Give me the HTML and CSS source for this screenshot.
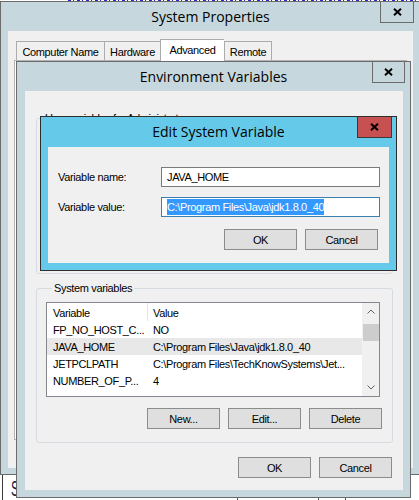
FILE: index.html
```html
<!DOCTYPE html>
<html>
<head>
<meta charset="utf-8">
<title>Edit System Variable</title>
<link rel="stylesheet" href="styles.css">
</head>
<body>
<div class="desk">
  <div class="bg-strip"></div>
  <div class="bg-bottom"><span class="bg-s">S</span></div>
  <div class="bg-cells"><div class="cell1"></div><div class="cell2"></div></div>

  <div class="win win-sys">
    <div class="tb">
      <div class="title">System Properties</div>
      <div class="close close-sys"><svg width="9" height="8" viewBox="0 0 9 8"><path d="M1 0.8 L8 7.2 M8 0.8 L1 7.2" stroke="#000" stroke-width="2" fill="none"/></svg></div>
    </div>
    <div class="client sys-client">
      <div class="tabs">
        <div class="tab t-cn">Computer Name</div>
        <div class="tab t-hw">Hardware</div>
        <div class="tab t-adv sel-tab">Advanced</div>
        <div class="tab t-rem">Remote</div>
      </div>
      <div class="tabpanel"></div>
    </div>
  </div>

  <div class="win win-env">
    <div class="tb">
      <div class="title">Environment Variables</div>
      <div class="close close-env"><svg width="9" height="8" viewBox="0 0 9 8"><path d="M1 0.8 L8 7.2 M8 0.8 L1 7.2" stroke="#000" stroke-width="2" fill="none"/></svg></div>
    </div>
    <div class="client env-client">
      <fieldset class="grp grp-user">
        <legend>User variables for Administrator</legend>
        <div class="user-space"></div>
      </fieldset>
      <fieldset class="grp grp-sys">
        <legend>System variables</legend>
        <div class="list">
          <div class="list-main">
            <div class="lrow lhead"><div class="c1">Variable</div><div class="c2">Value</div></div>
            <div class="lrow"><div class="c1">FP_NO_HOST_C...</div><div class="c2">NO</div></div>
            <div class="lrow hl"><div class="c1">JAVA_HOME</div><div class="c2">C:\Program Files\Java\jdk1.8.0_40</div></div>
            <div class="lrow"><div class="c1">JETPCLPATH</div><div class="c2">C:\Program Files\TechKnowSystems\Jet...</div></div>
            <div class="lrow"><div class="c1">NUMBER_OF_P...</div><div class="c2">4</div></div>
          </div>
          <div class="scroll">
            <div class="sbtn"><svg width="8" height="5" viewBox="0 0 8 5"><polyline points="0.5,4.5 4,1 7.5,4.5" stroke="#606060" fill="none"/></svg></div>
            <div class="track"><div class="thumb"></div></div>
            <div class="sbtn"><svg width="8" height="5" viewBox="0 0 8 5"><polyline points="0.5,0.5 4,4 7.5,0.5" stroke="#606060" fill="none"/></svg></div>
          </div>
        </div>
        <div class="btnrow grp-btns">
          <div class="btn">New...</div>
          <div class="btn">Edit...</div>
          <div class="btn">Delete</div>
        </div>
      </fieldset>
      <div class="btnrow env-btns">
        <div class="btn">OK</div>
        <div class="btn">Cancel</div>
      </div>
    </div>
  </div>

  <div class="win win-edit">
    <div class="tb">
      <div class="title">Edit System Variable</div>
      <div class="close close-edit"><svg width="9" height="8" viewBox="0 0 9 8"><path d="M1 0.8 L8 7.2 M8 0.8 L1 7.2" stroke="#000" stroke-width="2" fill="none"/></svg></div>
    </div>
    <div class="client edit-client">
      <div class="form">
        <div class="lbl">Variable name:</div>
        <div class="field">JAVA_HOME</div>
        <div class="lbl">Variable value:</div>
        <div class="field focus"><span class="selected">C:\Program Files\Java\jdk1.8.0_40</span></div>
      </div>
      <div class="btnrow edit-btns">
        <div class="btn">OK</div>
        <div class="btn">Cancel</div>
      </div>
    </div>
  </div>
</div>
</body>
</html>
```

FILE: styles.css
```css
* { box-sizing: border-box; }
html, body { margin: 0; padding: 0; }
body {
  width: 419px;
  height: 500px;
  overflow: hidden;
  background: #fff;
  font-family: "Liberation Sans", Arial, sans-serif;
  font-size: 11px;
  letter-spacing: -0.35px;
  color: #000;
}
.desk { position: relative; width: 419px; height: 500px; overflow: hidden; }

/* things behind the windows */
.bg-strip {
  position: absolute; top: 0; left: 68px; width: 351px; height: 1px;
  background: repeating-linear-gradient(90deg, #2a2ad0 0 3px, transparent 3px 5px, #2a2ad0 5px 6px, transparent 6px 9px);
}
.bg-bottom {
  position: absolute; left: 2px; top: 475px; width: 417px; height: 25px;
  background: #fff; border-left: 1px solid #3c3c3c;
}
.bg-s {
  display: inline-block; margin-left: 8px; margin-top: 3px;
  font-size: 22px; line-height: 22px; color: #1b1b3a;
  transform: scaleX(0.55); transform-origin: left top;
}
.bg-cells { position: absolute; left: 237px; top: 485px; display: flex; height: 20px; }
.cell1 { width: 81px; border-left: 1px solid #555; }
.cell2 { width: 28px; border-left: 1px solid #555; border-right: 1px solid #555; }

/* windows */
.win {
  position: absolute;
  display: flex; flex-direction: column;
  border: 1px solid #6b6b6b;
  background: #c6d8de;
}
.win-sys { left: 0; top: 1px; width: 421px; height: 474px; }
.win-env { left: 16px; top: 61px; width: 395px; height: 437px; }
.win-edit { left: 40px; top: 116px; width: 357px; height: 155px; background: #65caea; border-color: #2e2e2e; }

.tb {
  flex: none;
  height: 29px;
  display: grid;
  grid-template-columns: 1fr auto 1fr;
  align-items: center;
}
.win-edit .tb { height: 30px; }
.title {
  grid-column: 2;
  font-family: "Open Sans", "Noto Sans", sans-serif;
  font-size: 14px;
  letter-spacing: 0;
  white-space: nowrap;
  line-height: 18px;
  color: #000;
}
.close {
  grid-column: 3;
  justify-self: end;
  align-self: start;
  height: 21px;
  border: 1px solid #6b6b6b;
  border-top: 0;
  display: flex; align-items: center; justify-content: center;
}
.close svg { display: block; }
.close-sys { width: 34px; margin-right: 6px; }
.close-env { width: 33px; margin-right: 5px; }
.close-edit { width: 35px; margin-right: 4px; background: #c75050; border-color: #3a3a3a; }

.client { flex: 1; background: #f0f0f0; min-height: 0; }

/* System Properties */
.sys-client { margin: 0 7px 6px 7px; padding: 8px 6px 0; }
.tabs { display: flex; align-items: flex-end; height: 21px; margin-left: 2px; position: relative; z-index: 1; }
.tab {
  height: 19px;
  border: 1px solid #acacac; border-bottom: 0; border-right: 0;
  background: #f0f0f0;
  display: flex; align-items: center; justify-content: center;
  padding-top: 2px;
  white-space: nowrap;
}
.t-cn { width: 88px; }
.t-hw { width: 56px; }
.t-adv { width: 64px; }
.t-rem { width: 48px; border-right: 1px solid #acacac; }
.sel-tab { height: 22px; margin-bottom: -1px; background: #fff; padding-top: 0; padding-bottom: 2px; }
.tabpanel { height: 380px; border: 1px solid #b4b4b4; background: #fff; }

/* Environment Variables */
.env-client { margin: 0 7px 7px 8px; padding: 21px 10px 0 11px; display: flex; flex-direction: column; }
.grp {
  margin: 0;
  min-width: 0;
  border: 1px solid #d5dbe0;
  border-radius: 3px;
}
.grp legend { padding: 0 2px; margin-left: 6px; line-height: 13px; }
.grp-user { padding: 0; }
.user-space { height: 148px; }
.grp-sys { margin-top: 8px; padding: 7px 11px 13px 9px; }

.list { height: 95px; border: 1px solid #828790; background: #fff; display: flex; margin-right: 1px; }
.list-main { flex: 1; overflow: hidden; }
.lrow { display: flex; height: 17px; align-items: center; white-space: nowrap; }
.lrow .c1 { width: 101px; flex: none; padding-left: 6px; }
.lrow .c2 { padding-left: 5px; }
.lhead { height: 18px; align-items: stretch; }
.lhead .c1, .lhead .c2 { display: flex; align-items: center; padding-top: 2px; }
.lhead .c1 { border-right: 1px solid #e5e5e5; }
.lrow.hl { background: #e8e8e8; }

.scroll { width: 17px; flex: none; background: #f0f0f0; display: flex; flex-direction: column; }
.sbtn { height: 17px; display: flex; align-items: center; justify-content: center; }
.sbtn svg { display: block; }
.track { flex: 1; }
.thumb { height: 17px; margin: 4px 0 0 1px; background: #cdcdcd; }

.btnrow { display: flex; justify-content: flex-end; gap: 8px; }
.btn {
  width: 73px; height: 21px;
  border: 1px solid #8c8c8c;
  background: #dfdfdf;
  display: flex; align-items: center; justify-content: center;
  white-space: nowrap;
}
.grp-btns { margin-top: 11px; margin-right: -1px; }
.env-btns { margin-top: 14px; margin-right: 1px; }

/* Edit System Variable */
.edit-client { margin: 0 7px 7px 7px; padding: 20px 9px 0 10px; }
.form { display: grid; grid-template-columns: 103px 219px; row-gap: 10px; align-items: center; }
.field {
  height: 20px;
  border: 1px solid #7a7a7a;
  background: #fff;
  padding-left: 5px;
  display: flex; align-items: center;
  white-space: nowrap;
  overflow: hidden;
}
.field.focus { border-color: #3c7fb1; }
.selected { background: #3399ff; color: #fff; line-height: 16px; }
.edit-btns { margin-top: 12px; margin-right: 2px; }
```
